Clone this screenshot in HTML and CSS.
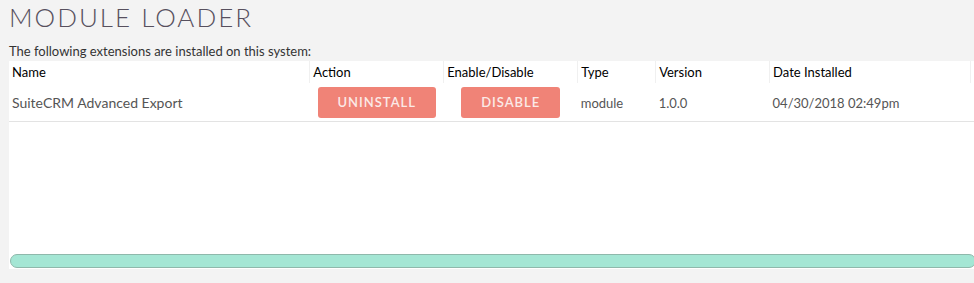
FILE: index.html
```html
<!DOCTYPE html>
<html lang="en">
<head>
    <meta charset="UTF-8">
    <title>Module Loader</title>
    <link rel="stylesheet" href="styles.css">
</head>
<body>
    <h2 class="title">MODULE LOADER</h2>

    <p class="intro">The following extensions are installed on this system:</p>

    <div class="panel">
        <table class="list">
            <tr class="head">
                <th class="c-name">Name</th>
                <th class="c-action">Action</th>
                <th class="c-enable">Enable/Disable</th>
                <th class="c-type">Type</th>
                <th class="c-version">Version</th>
                <th class="c-date">Date Installed</th>
                <th class="c-last"></th>
            </tr>
            <tr class="row">
                <td class="name">SuiteCRM Advanced Export</td>
                <td class="btn-cell"><button type="button" class="btn btn-wide">UNINSTALL</button></td>
                <td class="btn-cell"><button type="button" class="btn">DISABLE</button></td>
                <td>module</td>
                <td>1.0.0</td>
                <td>04/30/2018 02:49pm</td>
                <td></td>
            </tr>
        </table>

        <div class="bar"></div>
    </div>
</body>
</html>
```

FILE: styles.css
```css
*{
    margin: 0;
    padding: 0;
    box-sizing: border-box;
}

body{
    background-color: #f3f3f3;
    font-family: Lato, 'Liberation Sans', sans-serif;
    padding-left: 9px;
}

.title{
    font-weight: 300;
    font-size: 26px;
    letter-spacing: 2px;
    color: #57505e;
    line-height: 32px;
    padding-top: 1px;
    height: 42px;
}

.intro{
    font-size: 13px;
    color: #333333;
    line-height: 18px;
    height: 19px;
}

.panel{
    background-color: #ffffff;
    height: 208px;
    position: relative;
}

.list{
    border-collapse: collapse;
    width: 100%;
}

.list th{
    font-weight: normal;
    font-size: 13px;
    color: #000000;
    text-align: left;
    height: 22px;
    padding-left: 3px;
    border-right: 1px solid #f0f0f0;
}

.c-name{ width: 301px; }
.c-action{ width: 134px; }
.c-enable{ width: 134px; }
.c-type{ width: 78px; }
.c-version{ width: 114px; }
.c-date{ width: 201px; }
.list th.c-last{ border-right: none; }

.list .row td{
    font-size: 13px;
    color: #555555;
    height: 38px;
    padding-left: 3px;
    padding-top: 2px;
    border-bottom: 1px solid #e3e3e3;
}

.list .row td.name{
    font-size: 14px;
}

.list .row td.btn-cell{
    text-align: center;
    padding-left: 0;
    padding-top: 0;
}

.btn{
    background-color: #f08377;
    color: #fbeae7;
    border: none;
    border-radius: 3px;
    font-family: Lato, 'Liberation Sans', sans-serif;
    font-size: 13px;
    font-weight: 600;
    letter-spacing: 1px;
    height: 31px;
    width: 99px;
    margin-top: 1px;
}

.btn-wide{
    width: 118px;
}

.bar{
    position: absolute;
    left: 1px;
    right: -2px;
    top: 193px;
    height: 14px;
    background-color: #a4e6d4;
    border: 1px solid #8fb8ab;
    border-radius: 7px;
}
```
